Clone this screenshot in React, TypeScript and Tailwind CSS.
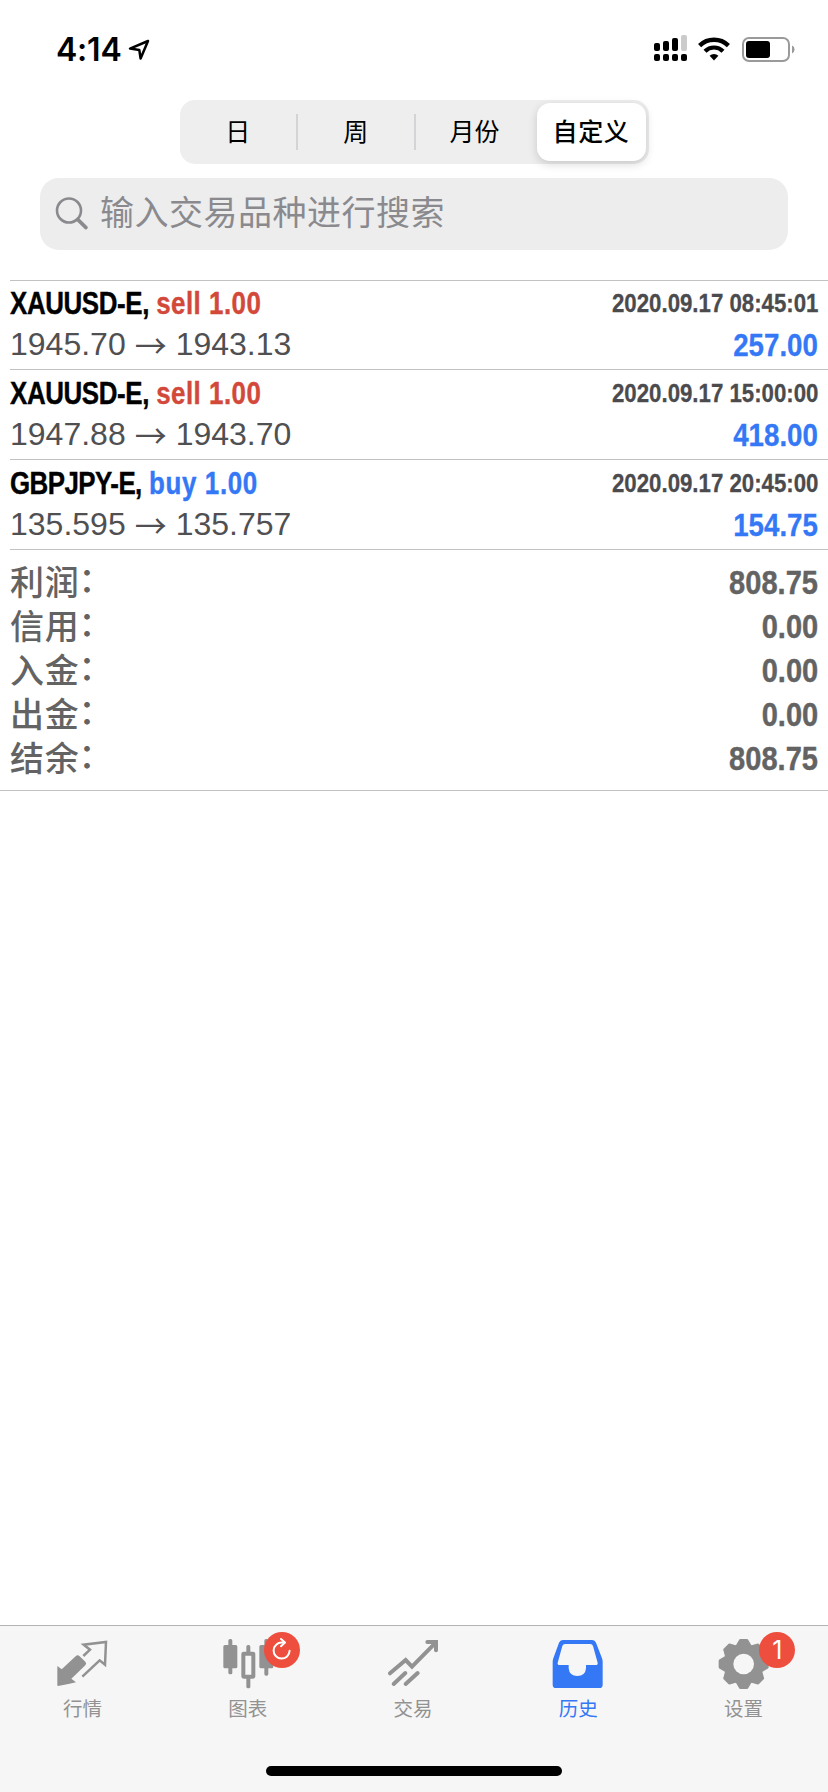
import type { ReactNode } from 'react'

type Deal = {
  symbol: string
  side: 'sell' | 'buy'
  volume: string
  open: string
  close: string
  time: string
  profit: string
}

type Tab = {
  label: string
  icon: ReactNode
  badge?: ReactNode
  active?: boolean
}

const deals: Deal[] = [
  { symbol: 'XAUUSD-E', side: 'sell', volume: '1.00', open: '1945.70', close: '1943.13', time: '2020.09.17 08:45:01', profit: '257.00' },
  { symbol: 'XAUUSD-E', side: 'sell', volume: '1.00', open: '1947.88', close: '1943.70', time: '2020.09.17 15:00:00', profit: '418.00' },
  { symbol: 'GBPJPY-E', side: 'buy', volume: '1.00', open: '135.595', close: '135.757', time: '2020.09.17 20:45:00', profit: '154.75' },
]

const summary = [
  { label: '利润', value: '808.75' },
  { label: '信用', value: '0.00' },
  { label: '入金', value: '0.00' },
  { label: '出金', value: '0.00' },
  { label: '结余', value: '808.75' },
]

const periods = ['日', '周', '月份']

const StatusBar = () => (
  <header className="flex h-[100px] items-start justify-between pl-[56px] pr-[32px]">
    <div className="flex items-center pt-[31px]">
      <span className="font-['Inter'] text-[32px] leading-[38px] font-semibold tracking-[-0.2px]">4:14</span>
      <svg className="ml-[6px]" width="22" height="22" viewBox="0 0 22 22" fill="none" stroke="#000" strokeWidth="2.5" strokeLinejoin="round">
        <path d="M20 2 L2 9.6 L11.3 11 L12.6 19.6 Z" />
      </svg>
    </div>
    <div className="flex items-start pt-[35px]">
      <svg width="33" height="27" viewBox="0 0 33 27">
        <rect x="0" y="8" width="6" height="8" rx="2" />
        <rect x="9" y="6" width="6" height="10" rx="2" />
        <rect x="18" y="3" width="6" height="13" rx="2" />
        <rect x="27" y="0" width="6" height="16" rx="2" fill="#cbcbcb" />
        <rect x="0" y="19" width="6" height="7" rx="2" />
        <rect x="9" y="19" width="6" height="7" rx="2" />
        <rect x="18" y="19" width="6" height="7" rx="2" />
        <rect x="27" y="19" width="6" height="7" rx="2" />
      </svg>
      <svg className="mt-[2px] ml-[11px]" width="32" height="24" viewBox="0 0 32 24">
        <path d="M1.6 8.6 A20.6 20.6 0 0 1 30.4 8.6" fill="none" stroke="#000" strokeWidth="4.4" />
        <path d="M7 14.2 A12.8 12.8 0 0 1 25 14.2" fill="none" stroke="#000" strokeWidth="4.2" />
        <path d="M11.6 18.8 A6.4 6.4 0 0 1 20.4 18.8 L16 23.4 Z" />
      </svg>
      <svg className="mt-[2px] ml-[12px]" width="54" height="26" viewBox="0 0 54 26">
        <rect x="1" y="1" width="46" height="23" rx="6" fill="none" stroke="#9a9a9a" strokeWidth="2" />
        <rect x="4" y="4" width="24" height="17" rx="3" />
        <path d="M50 8.5 A4.4 4.4 0 0 1 50 16.5 Z" fill="#9a9a9a" />
      </svg>
    </div>
  </header>
)

const PeriodSwitch = () => (
  <div className="mx-auto flex h-[64px] w-[469px] rounded-[15px] bg-[#eeeeef] py-[3px] text-[25px] leading-[58px]">
    {periods.map((period, i) => (
      <div key={period} className="flex w-[118px] items-center">
        <span className="flex-1 text-center">{period}</span>
        {i < periods.length - 1 && <span className="h-[36px] w-[1.5px] bg-[#d4d4d6]" />}
      </div>
    ))}
    <div className="ml-[3px] w-[109px] rounded-[13px] bg-white text-center font-medium tracking-[0.6px] shadow-[0_3px_10px_rgba(0,0,0,0.16)]">
      自定义
    </div>
  </div>
)

const SearchField = () => (
  <div className="mx-[40px] mt-[14px] flex h-[72px] items-center rounded-[19px] bg-[#ededee] pl-[15px] text-[#8a8a8e]">
    <svg width="34" height="34" viewBox="0 0 34 34" fill="none" stroke="currentColor">
      <circle cx="14" cy="13.5" r="12" strokeWidth="2.6" />
      <path d="M22.6 22.4 L31 30.6" strokeWidth="3.6" strokeLinecap="round" />
    </svg>
    <span className="ml-[11px] text-[34px] leading-[68px] tracking-[0.5px] pb-[2px]">输入交易品种进行搜索</span>
  </div>
)

const DealRow = ({ deal }: { deal: Deal }) => {
  const isSell = deal.side === 'sell'

  return (
    <div className="ml-[10px] flex h-[90px] justify-between border-t border-[#c2c2c4] pt-px pr-[10px] first:h-[89px] first:pt-0">
      <div className="flex flex-col">
        <p className="origin-left scale-x-[0.81] text-[32px] leading-[44px] font-bold whitespace-pre [-webkit-text-stroke:0.4px]">
          <span className={isSell ? 'tracking-[-0.5px]' : 'tracking-[-0.7px]'}>{deal.symbol},</span>{' '}
          <span className={isSell ? 'tracking-[0.6px] text-[#d2493a]' : 'tracking-[0.8px] text-[#3478f6]'}>
            {deal.side} {deal.volume}
          </span>
        </p>
        <p className="flex h-[38px] text-[32px] leading-[38px] text-[#505052]">
          <span>{deal.open}</span>
          <span className="w-[50px] text-center font-['Noto_Sans_CJK_SC']">→</span>
          <span>{deal.close}</span>
        </p>
      </div>
      <div className="flex flex-col items-end font-bold [-webkit-text-stroke:0.3px]">
        <p className="origin-right scale-x-[0.855] text-[26px] leading-[44px] text-[#4b4b4e]">{deal.time}</p>
        <p className="origin-right scale-x-[0.865] text-[32px] leading-[40px] text-[#3478f6]">{deal.profit}</p>
      </div>
    </div>
  )
}

const Summary = () => (
  <div className="h-[242px] border-b border-[#c2c2c4] text-[#636363]">
    <div className="ml-[10px] border-t border-[#c2c2c4] pt-[11px] pr-[10px]">
      {summary.map((item) => (
        <div key={item.label} className="flex h-[44px] items-center justify-between">
          <span className="text-[34px] leading-[44px] font-medium tracking-[0.8px]">
            {item.label}
            <span className="relative top-[-3px] left-[-1px]">：</span>
          </span>
          <span className="origin-right scale-x-[0.88] text-[33px] leading-[44px] font-bold [-webkit-text-stroke:0.4px]">
            {item.value}
          </span>
        </div>
      ))}
    </div>
  </div>
)

const QuotesIcon = () => (
  <svg width="52" height="52" viewBox="170 84 156 156">
    <path d="M171 168 L184 178 L226 139 Q232 133 238 139 L255 155 Q260 160 255 166 L213 206 L227 217 Q200 224 173 228 Q171 228 171 225 Z" fill="#929292" />
    <path d="M249 138 L269 119 L250 104 L317 96 L314 164 L298 151 L246 200" fill="none" stroke="#929292" strokeWidth="7.5" />
  </svg>
)

const ChartIcon = () => (
  <svg width="52" height="52" viewBox="665 84 156 156" fill="#929292">
    <rect x="684" y="87" width="12" height="106" rx="5" />
    <rect x="669" y="105" width="42" height="70" rx="5" />
    <rect x="738" y="105" width="12" height="26" rx="5" />
    <rect x="738" y="200" width="12" height="35" rx="5" />
    <rect x="729" y="131" width="30" height="69" rx="1" fill="none" stroke="#929292" strokeWidth="12" />
    <rect x="792" y="87" width="12" height="110" rx="5" />
    <rect x="777" y="105" width="42" height="70" rx="5" />
  </svg>
)

const TradeIcon = () => (
  <svg width="52" height="52" viewBox="171 84 156 156" fill="none" stroke="#929292" strokeWidth="12" strokeLinecap="round">
    <path d="M180 190 L227 150 L246 170 L317 98" strokeLinejoin="miter" />
    <path d="M292 96 L318 96 L318 121" />
    <path d="M191 222 L226 189" />
    <path d="M227 222 L263 189" />
  </svg>
)

const HistoryIcon = () => (
  <svg width="52" height="52" viewBox="667 84 156 156">
    <path
      fillRule="evenodd"
      fill="#3478f6"
      d="M699 90 H788 Q796 90 799 98 L817 145 Q819 150 819 156 V224 Q819 234 809 234 H679 Q669 234 669 224 V156 Q669 150 671 145 L688 98 Q691 90 699 90 Z M706 102 Q700 102 698 108 L684 158 Q683 165 690 165 H717 V175 Q719 198 743 198 Q767 198 769 175 V165 H798 Q805 165 804 158 L790 108 Q788 102 782 102 Z"
    />
  </svg>
)

const SettingsIcon = () => (
  <svg width="52" height="52" viewBox="292 84 156 156">
    <circle cx="372" cy="162" r="60" fill="#929292" />
    <g fill="#929292" stroke="#929292" strokeWidth="8" strokeLinejoin="round">
      {[0, 45, 90, 135, 180, 225, 270, 315].map((angle) => (
        <path key={angle} d="M351 110 L362 91 H382 L393 110 Z" transform={`rotate(${angle} 372 162)`} />
      ))}
    </g>
    <circle cx="372" cy="162" r="31" fill="#f6f6f6" />
  </svg>
)

const ReloadIcon = () => (
  <svg width="36" height="36" viewBox="0 0 36 36" fill="none" stroke="#fff" strokeWidth="2" strokeLinecap="round" strokeLinejoin="round">
    <path d="M20.5 10.6 H18 A8 8 0 1 0 25.6 18.8" />
    <path d="M17 7 L21 10.6 L17 14.2" />
  </svg>
)

const tabs: Tab[] = [
  { label: '行情', icon: <QuotesIcon /> },
  { label: '图表', icon: <ChartIcon />, badge: <ReloadIcon /> },
  { label: '交易', icon: <TradeIcon /> },
  { label: '历史', icon: <HistoryIcon />, active: true },
  { label: '设置', icon: <SettingsIcon />, badge: '1' },
]

const TabBar = () => (
  <nav className="flex h-[167px] flex-col items-center justify-between border-t border-[#b4b4b6] bg-[#f6f6f6] pb-[16px]">
    <div className="flex w-full pt-[12px] pr-[2px]">
      {tabs.map((tab) => (
        <div key={tab.label} className={`flex flex-1 flex-col items-center ${tab.active ? 'text-[#3478f6]' : 'text-[#929292]'}`}>
          <div className="relative">
            {tab.icon}
            {tab.badge && (
              <span className="absolute top-[-6px] left-[42px] flex h-[36px] w-[36px] items-center justify-center rounded-full bg-[#ee4e3d] font-['Inter'] text-[25px] leading-[36px] text-white">
                {tab.badge}
              </span>
            )}
          </div>
          <span className="mt-[4px] text-[19.5px] leading-[30px]">{tab.label}</span>
        </div>
      ))}
    </div>
    <div className="h-[10px] w-[296px] rounded-full bg-black" />
  </nav>
)

const App = () => (
  <div className="flex h-[1792px] w-[828px] flex-col overflow-hidden bg-white font-['Liberation_Sans','Noto_Sans_CJK_SC',sans-serif] text-black">
    <StatusBar />
    <PeriodSwitch />
    <SearchField />
    <main className="mt-[30px] flex-1">
      {deals.map((deal) => (
        <DealRow key={deal.time} deal={deal} />
      ))}
      <Summary />
    </main>
    <TabBar />
  </div>
)

export default App
